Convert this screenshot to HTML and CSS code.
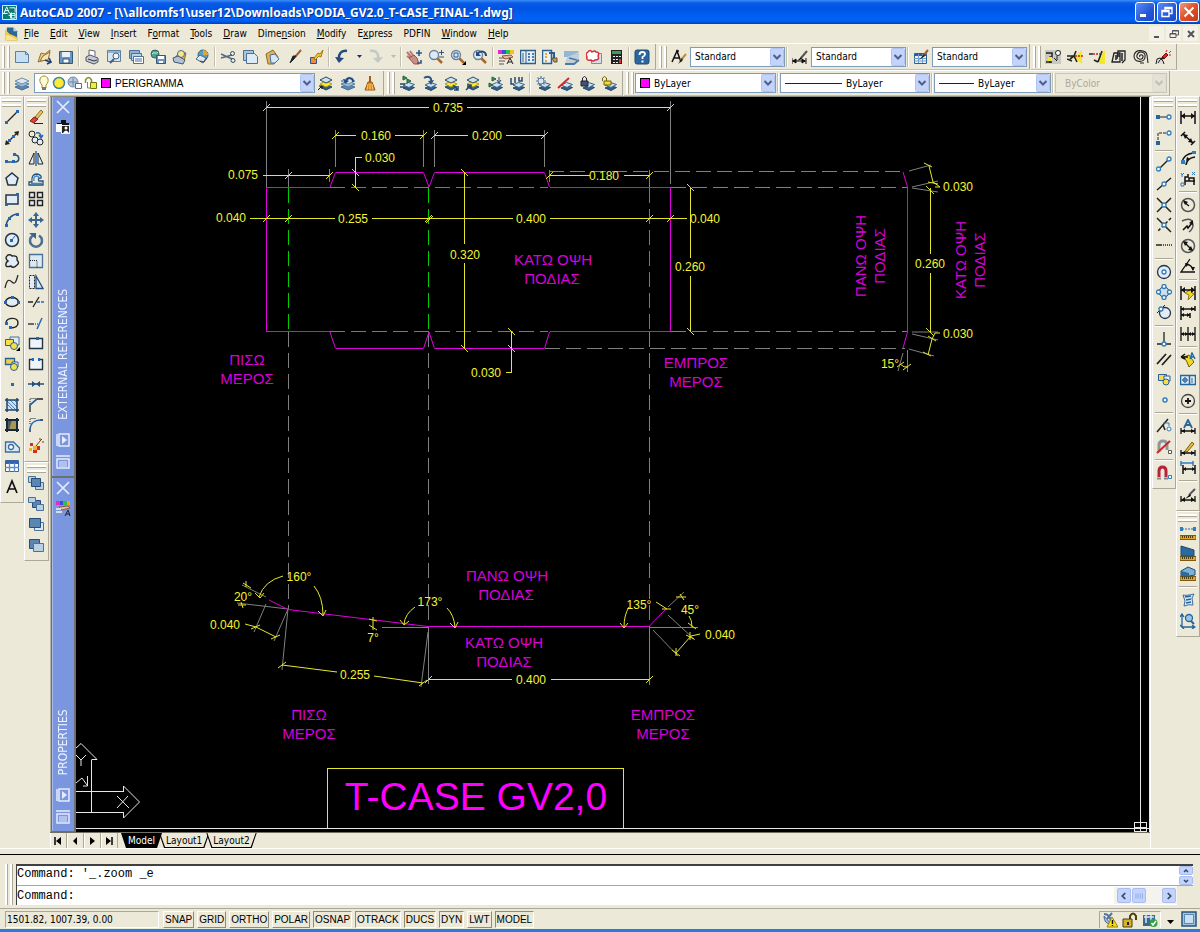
FILE: index.html
```html
<!DOCTYPE html>
<html lang="en">
<head>
<meta charset="utf-8">
<title>AutoCAD 2007</title>
<link rel="stylesheet" href="styles.css">
</head>
<body>
<svg class="defs" aria-hidden="true">
  <symbol id="layers" viewBox="0 0 16 16"><path d="M1 12l7 3 7-3-7-3z" fill="#5d86ad" stroke="#456f98"/><path d="M1 9l7 3 7-3-7-3z" fill="#9dbad4" stroke="#567fa6"/><path d="M1 6l7 3 7-3-7-3z" fill="#dbe8f3" stroke="#6b8fb0"/></symbol>
  <symbol id="lay" viewBox="0 0 16 16"><path d="M4 13l6 2.500 5.500-3-6-2z" fill="#2f5f8f" stroke="#24486d"/><path d="M4 10l6 2.500 5.500-3-6-2z" fill="#cfe0ef" stroke="#3a658f"/></symbol>
  <symbol id="layy" viewBox="0 0 16 16"><path d="M2 12l6 3 6-3-6-3z" fill="#2f5f8f" stroke="#24486d"/><path d="M2 9l6 3 6-3-6-3z" fill="#ffe92e" stroke="#b59c10"/><path d="M2 5l6 3 6-3-6-3z" fill="#cfe0ef" stroke="#24486d"/></symbol>
  <symbol id="mag" viewBox="0 0 16 16"><path d="M9 9l5 5" stroke="#a8682c" stroke-width="2.500"/><circle cx="6" cy="6" r="4.500" fill="#dcebf7" stroke="#6c8299" stroke-width="1.300"/></symbol>
  <symbol id="chev" viewBox="0 0 14 18"><rect x=".5" y=".5" width="13" height="17" rx="1" fill="#c3d3fb" stroke="#b0c4f4"/><path d="M3.500 7l3.500 3.500L10.500 7" stroke="#4d6185" stroke-width="2" fill="none"/></symbol>
  <symbol id="ruler" viewBox="0 0 16 16"><path d="M0 11.500h16v4H0z" fill="#e0a52b" stroke="#80590c"/><path d="M2.500 12v2m2-2v2m2-2v2m2-2v2m2-2v2m2-2v2" stroke="#543a05"/></symbol>
  <symbol id="brush" viewBox="0 0 16 16"><path d="M15 1L9 8" stroke="#9b642f" stroke-width="2"/><path d="M10 7L8 10l-4 4 3-7z" fill="#222" stroke="#222"/></symbol>
</svg>

<header class="titlebar">
  <svg class="app-icon" viewBox="0 0 16 16"><path d="M.5.5h15v15H.5z" fill="#0b7a73" stroke="#dff"/><path d="M2 9l3-7 3 7M3 6h4M1 9h5M8 3h6M7 11h7M10 8v6M14 3v5" stroke="#fff"/><path d="M9 9h5v5H9z" stroke="#fff"/></svg>
  <h1>AutoCAD 2007 - [\\allcomfs1\user12\Downloads\PODIA_GV2.0_T-CASE_FINAL-1.dwg]</h1>
  <div class="win-buttons">
    <button aria-label="Minimize"><svg viewBox="0 0 16 16"><path d="M3 11.500h6" stroke="#fff" stroke-width="3"/></svg></button>
    <button aria-label="Restore"><svg viewBox="0 0 16 16"><path d="M3 6.500h7v6H3zM6 6V3.500h7v6h-3M6 4.500h7M3 7.500h7" stroke="#fff" stroke-width="1.400"/></svg></button>
    <button class="close" aria-label="Close"><svg viewBox="0 0 16 16"><path d="M3.500 3.500l9 9m0-9l-9 9" stroke="#fff" stroke-width="2"/></svg></button>
  </div>
</header>

<nav class="menubar">
  <svg class="doc-icon" viewBox="0 0 16 16"><path d="M3 1h7l4 4v10H3z" fill="#2d6797"/><path d="M10 1l4 4h-4z" fill="#bcd6ea"/><path d="M1 3l5 5 3 1 6 3v3H1z" fill="#f6c843"/><path d="M2 9l5 1 7 4v1H2z" fill="#fbe394"/></svg>
  <a href="#"><u>F</u>ile</a><a href="#"><u>E</u>dit</a><a href="#"><u>V</u>iew</a><a href="#"><u>I</u>nsert</a><a href="#">F<u>o</u>rmat</a><a href="#"><u>T</u>ools</a><a href="#"><u>D</u>raw</a><a href="#">Dime<u>n</u>sion</a><a href="#"><u>M</u>odify</a><a href="#">E<u>x</u>press</a><a href="#">PDFIN</a><a href="#"><u>W</u>indow</a><a href="#"><u>H</u>elp</a>
  <div class="mdi">
    <button aria-label="Minimize drawing"><svg viewBox="0 0 12 12"><path d="M3 9h5" stroke="#555" stroke-width="2"/></svg></button>
    <button aria-label="Restore drawing"><svg viewBox="0 0 12 12"><path d="M2 5.500h6v4H2zM4.500 5V2.500h6V7H8M4.500 3h6M2 6h6" stroke="#555"/></svg></button>
    <button aria-label="Close drawing"><svg viewBox="0 0 12 12"><path d="M3 3l6 6m0-6L3 9" stroke="#555" stroke-width="2"/></svg></button>
  </div>
</nav>

<div class="toolrow">
  <div class="bar">
    <span class="grip"></span>
    <button aria-label="New"><svg viewBox="0 0 16 16"><path d="M1.500 2.500h10l3 3v8h-13z" fill="#c9def0" stroke="#5b80a3"/><path d="M11.500 2.500v3h3" stroke="#5b80a3"/></svg></button>
    <button aria-label="Open"><svg viewBox="0 0 16 16"><path d="M2 13L5 4l4 1 5-4-2 9z" fill="#e9c878" stroke="#93733a"/><path d="M4 12l3-5 7-4-2 8z" fill="#f7e5b4" stroke="#93733a"/><path d="M9 11l5 2M13 9l2 4-4 2" stroke="#1e3f70" stroke-width="1.600"/></svg></button>
    <button aria-label="Save"><svg viewBox="0 0 16 16"><path d="M1.500 2.500h13v12h-13z" fill="#6d95bd" stroke="#35597e"/><path d="M4 3h8v5H4z" fill="#e8f0f8"/><path d="M5 10h6v4H5z" fill="#fff" stroke="#35597e"/></svg></button>
    <span class="sep"></span>
    <button aria-label="Plot"><svg viewBox="0 0 16 16"><path d="M5 7V1l6 1v5" fill="#fff" stroke="#667"/><path d="M2 8l4-2 8 3v4l-4 2-8-3z" fill="#c5c9d4" stroke="#556"/><path d="M4 10l6 2 3-1" stroke="#334"/></svg></button>
    <button aria-label="Plot preview"><svg viewBox="0 0 16 16"><path d="M1.500 1.500h13v11h-13z" fill="#d3e4f3" stroke="#5b80a3"/><path d="M1 3h14" stroke="#5b80a3"/><circle cx="10" cy="7" r="3" fill="#eef6fc" stroke="#445e7c"/><path d="M8 10l-4 4" stroke="#445e7c" stroke-width="2"/></svg></button>
    <button aria-label="Publish"><svg viewBox="0 0 16 16"><path d="M1.500 1.500h10v8h-10z" fill="#8fb2d3" stroke="#4b7197"/><path d="M3.500 4.500h10v7h-10z" fill="#b9d1e7" stroke="#4b7197"/><path d="M5.500 7.500h10v7h-10z" fill="#fff" stroke="#4b7197"/><path d="M7 10h7M7 12h7" stroke="#4b7197"/></svg></button>
    <button aria-label="eTransmit"><svg viewBox="0 0 16 16"><circle cx="5" cy="5" r="4" fill="#4fa08e" stroke="#2c6458"/><path d="M2 5c3-3 4 1 6-2" stroke="#bfe"/><path d="M6.500 6.500h9v8h-9z" fill="#6d95bd" stroke="#35597e"/><path d="M8 7h6v3H8zM9 12h4v2H9z" fill="#fff"/></svg></button>
    <button aria-label="Publish to Web"><svg viewBox="0 0 16 16"><path d="M3 9l5-7 6 2-2 8z" fill="#f3c533" stroke="#8c6c14"/><circle cx="9" cy="5" r="3.500" fill="#f9e593" stroke="#4d6c8a"/><path d="M1 9l5-2 7 4-2 4-9-2z" fill="#b3c3d6" stroke="#44566f"/></svg></button>
    <button aria-label="3D DWF"><svg viewBox="0 0 16 16"><circle cx="9" cy="6" r="5" fill="#4fa3c8" stroke="#33687f"/><path d="M9 1a5 5 0 0 1 5 5H9z" fill="#e9a33b"/><path d="M2 10l4-4 6 3-3 5z" fill="#dce8f2" stroke="#567"/><path d="M6 12l4 1 3-4" stroke="#345"/></svg></button>
    <span class="sep"></span>
    <button aria-label="Cut"><svg viewBox="0 0 16 16"><path d="M1 5l11 5M1 9l11-3" stroke="#556b85" stroke-width="1.400"/><circle cx="12.500" cy="4.500" r="2" stroke="#2f4c70"/><circle cx="13" cy="11.500" r="2" stroke="#2f4c70"/></svg></button>
    <button aria-label="Copy"><svg viewBox="0 0 16 16"><path d="M1.500 1.500h10v10h-10z" fill="#a8c5df" stroke="#4b7197"/><path d="M4.500 4.500h8l3 3v7h-11z" fill="#dceaf6" stroke="#4b7197"/></svg></button>
    <button aria-label="Paste"><svg viewBox="0 0 16 16"><path d="M2 5l7-4 5 7-4 7H4z" fill="#e0b35a" stroke="#8f6a26"/><path d="M6 6l5-1 4 5-4 4H7z" fill="#d7e7f5" stroke="#4b7197"/></svg></button>
    <button aria-label="Match properties"><svg viewBox="0 0 16 16"><use href="#brush"/></svg></button>
    <button aria-label="Block editor"><svg viewBox="0 0 16 16"><path d="M2.500 8.500h6v6h-6z" fill="#f08a3c" stroke="#2c5788"/><path d="M6 9l4-5 2 1 3-4-2 7-2-1-4 4z" fill="#f5c62c" stroke="#a3791a"/></svg></button>
    <span class="sep"></span>
    <button aria-label="Undo"><svg viewBox="0 0 16 16"><path d="M13 2C7 1 4 5 5 12" stroke="#23497e" stroke-width="2.500"/><path d="M1 8l4 6 5-5z" fill="#23497e"/></svg></button>
    <button class="caret" aria-label="Undo list"><svg viewBox="0 0 6 16"><path d="M1 6h5L3.500 9z" fill="#15306a"/></svg></button>
    <button aria-label="Redo"><svg viewBox="0 0 16 16"><path d="M2 2c7-1 9 3 8 10" stroke="#c4c7c8" stroke-width="2.500"/><path d="M5 9l5 5 5-6z" fill="#c4c7c8"/></svg></button>
    <button class="caret" aria-label="Redo list"><svg viewBox="0 0 6 16"><path d="M1 6h5L3.500 9z" fill="#b9bbb8"/></svg></button>
    <span class="sep"></span>
    <button aria-label="Pan"><svg viewBox="0 0 16 16"><path d="M1 3l5 6M4 2l4 6M1 7l4 3" stroke="#b77a70" stroke-width="2"/><path d="M3 9l5-3 3 3 2 6H8z" fill="#c98e86" stroke="#95584f"/><path d="M13 1v6m-3-3h6M11 14h4v-3" stroke="#2c5788" stroke-width="1.600"/></svg></button>
    <button aria-label="Zoom realtime"><svg viewBox="0 0 16 16"><use href="#mag"/><path d="M13.500 1v5M11 3.500h5M11 8h5" stroke="#2c5788"/></svg></button>
    <button aria-label="Zoom window"><svg viewBox="0 0 16 16"><use href="#mag"/><path d="M4 4h4v4H4z" stroke="#2c5788"/><path d="M16 12v4h-4z" fill="#000"/></svg></button>
    <button aria-label="Zoom previous"><svg viewBox="0 0 16 16"><use href="#mag"/><path d="M14 7c0-5-5-6-9-2" stroke="#23497e" stroke-width="2"/><path d="M4 2v5h5z" fill="#23497e"/></svg></button>
    <span class="sep"></span>
    <button aria-label="Properties"><svg viewBox="0 0 16 16"><path d="M0 1h4v4H0z" fill="#e22bd0"/><path d="M4 1h4v4H4z" fill="#3650e0"/><path d="M8 1h4v4H8z" fill="#27c44b"/><path d="M12 1h4v4h-4z" fill="#f2c21c"/><path d="M4 7l9-1 2 2-8 2z" fill="#eab8a0" stroke="#94553d"/><path d="M1 9h5M1 12h6M1 15h5" stroke="#555"/><path d="M9 15l3-6 3 6m-5-2h4" stroke="#222"/></svg></button>
    <button aria-label="DesignCenter"><svg viewBox="0 0 16 16"><path d="M.5 1.500h15v13H.5z" fill="#e6f0f9" stroke="#2f5d8c" stroke-width="1.500"/><path d="M6 2v12M3 4v9" stroke="#2f5d8c"/><path d="M8 4h2v2H8zm4 0h2v2h-2zM8 7h2v2H8zm4 0h2v2h-2zm-4 3h2v2H8zm4 0h2v2h-2z" fill="#4a7dae"/></svg></button>
    <button aria-label="Tool palettes"><svg viewBox="0 0 16 16"><path d="M.5 1.500h9v13h-9z" fill="#e6f0f9" stroke="#2f5d8c" stroke-width="1.500"/><path d="M3 4h2v2H3zm0 3h2v2H3zm0 4h2v2H3z" fill="#e5a92b"/><path d="M7 4h5v7" stroke="#2f5d8c" stroke-width="2"/><path d="M10 9h5v4h-3z" fill="#b8a06c" stroke="#5d5235"/></svg></button>
    <button aria-label="Sheet set manager"><svg viewBox="0 0 16 16"><path d="M0 2h15l-4 6H0z" fill="#8fb7d8"/><path d="M3 8l12-5v9l-6 3H1z" fill="#c3cfd8"/><path d="M1 15h9l5-4M5 9l8 2" stroke="#4b7ba5" stroke-width="1.800"/></svg></button>
    <button aria-label="Markup set manager"><svg viewBox="0 0 16 16"><path d="M5.500 4.500h10v10h-10z" fill="#d3dde9" stroke="#7a8fa8"/><path d="M2 3q2-3 4 0 3-2 4 0 4 0 2 4 2 4-3 4-2 2-4 0-5 1-4-3-2-3 1-5z" fill="#fff" stroke="#db2b35" stroke-width="1.500"/></svg></button>
    <button aria-label="Quick calculator"><svg viewBox="0 0 16 16"><path d="M3 1h11v14H3z" fill="#222"/><path d="M4 2h9v3H4z" fill="#3f9c57"/><path d="M5 7h2v1H5zm3 0h2v1H8zm3 0h2v1h-2zM5 10h2v1H5zm3 0h2v1H8zM5 13h2v1H5zm3 0h2v1H8z" fill="#eee"/><path d="M11 10h2v4h-2z" fill="#d33"/></svg></button>
    <span class="sep"></span>
    <button aria-label="Help"><svg viewBox="0 0 16 16"><rect x="1" y="1" width="14" height="14" rx="2" fill="#2a67a0" stroke="#1f4a77"/><path d="M5.500 6q0-3 2.800-3 2.700 0 2.700 2.300Q11 7 8.500 8v2" stroke="#fff" stroke-width="1.800"/><path d="M7.500 11.500h2v2h-2z" fill="#fff"/></svg></button>
  </div>
  <div class="bar">
    <span class="grip"></span>
    <button aria-label="Text style"><svg viewBox="0 0 16 16"><path d="M1 13L6 2l4 11M3 9h5M5 2h3" stroke="#111" stroke-width="1.500"/><path d="M15 5l-5 6" stroke="#c08a3c" stroke-width="2"/><path d="M11 9l-4 6 5-4z" fill="#222"/></svg></button>
    <label class="combo w-std"><select aria-label="Text style"><option>Standard</option></select><svg class="chev"><use href="#chev"/></svg></label>
    <span class="sep"></span>
    <button aria-label="Dimension style"><svg viewBox="0 0 16 16"><path d="M0 12h14M0 9v6M14 9v6M1 12l3-2v4zM13 12l-3-2v4z" fill="#111" stroke="#111"/><path d="M15 2L9 9" stroke="#555" stroke-width="2"/><path d="M9 8l-4 4 5-2z" fill="#111"/></svg></button>
    <label class="combo w-std"><select aria-label="Dimension style"><option>Standard</option></select><svg class="chev"><use href="#chev"/></svg></label>
    <span class="sep"></span>
    <button aria-label="Table style"><svg viewBox="0 0 16 16"><path d="M1.500 4.500h12v10h-12z" fill="#e9f2fa" stroke="#2c5f95"/><path d="M1 5h13v2H1z" fill="#2c5f95"/><path d="M1 9.500h12M1 12h12M5.500 5v9M9.500 5v9" stroke="#6f9fcc"/><path d="M15 1L10 7" stroke="#a65f28" stroke-width="2"/><path d="M11 5l-5 6 6-4z" fill="#222"/></svg></button>
    <label class="combo w-std"><select aria-label="Table style"><option>Standard</option></select><svg class="chev"><use href="#chev"/></svg></label>
  </div>
  <div class="bar">
    <span class="grip"></span>
    <button aria-label="Layer merge"><svg viewBox="0 0 16 16"><path d="M0 1h16v14H0z" fill="#c9c9c4"/><path d="M1 4h6v4H5v6M1 13h6" stroke="#222" stroke-width="1.500"/><path d="M3 8h4v4H3z" fill="#f5e72a"/><circle cx="13" cy="4" r="2.500" fill="#fff" stroke="#222"/><path d="M12 7v4M9 9l3 3" stroke="#222"/></svg></button>
    <button aria-label="Break line"><svg viewBox="0 0 16 16"><path d="M7 8l8-7v14z" fill="#f5e72a"/><path d="M0 7h7M3 10l4-3 2-5M7 7l3 6M0 10l5 2" stroke="#222" stroke-width="1.600"/><path d="M8 7h8" stroke="#c22" stroke-width="1.500" stroke-dasharray="2 1"/></svg></button>
    <button aria-label="Extend line"><svg viewBox="0 0 16 16"><path d="M10 8l6-7v14h-6z" fill="#f5e72a"/><path d="M0 5h4M13 2L9 13M5 11l4 2" stroke="#222" stroke-width="1.600"/><path d="M4 5h7" stroke="#c22" stroke-width="1.500" stroke-dasharray="2 1"/></svg></button>
    <button aria-label="Copy nested"><svg viewBox="0 0 16 16"><path d="M1 13l2-9h6v9zM6 10l1-8h7v9l-3 3" fill="#e6e6e0" stroke="#222" stroke-width="1.300"/><path d="M5 6v5M11 4v8M8 5v3" stroke="#222" stroke-width="1.500"/></svg></button>
    <button aria-label="Spiral"><svg viewBox="0 0 16 16"><path d="M7 8c-2-3 4-3 3 0-1 4-7 2-6-2C6 1 13 3 12 8c0 6-11 6-11-1 1-8 12-6 13-1l1 8M7 14h4" stroke="#222" stroke-width="1.100"/></svg></button>
    <button aria-label="Explode text"><svg viewBox="0 0 16 16"><path d="M7 8l4-4 2 2-4 4z" fill="#d22" stroke="#7a1010"/><path d="M11 3l1-2m2 3l2-2m-2 4h2" stroke="#c22"/><path d="M1 15l1-5 3-1 3 3 1 3M3 14l2-3" stroke="#222" fill="#ddd"/><path d="M9 9l-4 1" stroke="#222" stroke-width="2"/></svg></button>
  </div>
</div>

<div class="toolrow">
  <div class="bar">
    <span class="grip"></span>
    <button aria-label="Layer properties"><svg viewBox="0 0 16 16"><use href="#layers"/></svg></button>
    <label class="combo w-layer">
      <svg class="layer-state" viewBox="2 0 62 16"><path d="M5 10C1 6 3 1 7 1s6 5 2 9v3H5z" fill="#fffbd0" stroke="#9a8c3c"/><path d="M5 12h4v3H5z" fill="#777"/><circle cx="22" cy="8" r="5.500" fill="#ffe936" stroke="#3987a5" stroke-width="1.500"/><circle cx="36" cy="7" r="5" fill="#b9c9da" stroke="#6988a7"/><path d="M32 7h8M36 3v8" stroke="#6988a7"/><path d="M38.500 8.500h6v5h-6z" fill="#fff" stroke="#668"/><path d="M48.500 8V5q3-5 6 0v4" stroke="#83912a" stroke-width="1.500"/><path d="M53.500 7.500h6v6h-6z" fill="#f2ec3a" stroke="#71761a"/><path d="M50.500 7v6h3" stroke="#83912a"/></svg>
      <span class="swatch"></span>
      <select aria-label="Layer"><option>PERIGRAMMA</option></select><svg class="chev"><use href="#chev"/></svg></label>
    <button aria-label="Make object's layer current"><svg viewBox="0 0 16 16"><use href="#layy"/><path d="M0 15l4-4m-3 0h3v3" stroke="#111"/></svg></button>
    <button aria-label="Layer previous"><svg viewBox="0 0 16 16"><use href="#layers"/><path d="M13 7C13 2 8 2 6 6" stroke="#23497e" stroke-width="2"/><path d="M3 4l2 5 4-3z" fill="#23497e"/></svg></button>
    <button aria-label="Layer states"><svg viewBox="0 0 16 16"><path d="M8 1v6" stroke="#9c5f1d" stroke-width="2"/><path d="M6 7h4l3 8H3z" fill="#e08b26" stroke="#96540f"/><path d="M6 9l-1 6M8 9v6M10 9l1 6" stroke="#f6c36b"/></svg></button>
  </div>
  <div class="bar">
    <span class="grip"></span>
    <button aria-label="Layer match"><svg viewBox="0 0 16 16"><use href="#lay"/><path d="M4 1l4 2-4 2zM8 4l4 2-4 2z" fill="#3b9466" stroke="#235d3e"/><path d="M1 9h5M1 12h5" stroke="#24486d" stroke-width="1.500"/></svg></button>
    <button aria-label="Change to current layer"><svg viewBox="0 0 16 16"><use href="#lay"/><path d="M3 3c5-3 8 0 7 4" stroke="#2c5788" stroke-width="2"/><path d="M7 6l3 4 3-5z" fill="#2c5788"/></svg></button>
    <button aria-label="Layer isolate"><svg viewBox="0 0 16 16"><use href="#layy"/><path d="M10 10l5 5m-4 0h4v-4" stroke="#24486d" stroke-width="1.500"/></svg></button>
    <button aria-label="Layer unisolate"><svg viewBox="0 0 16 16"><use href="#layy"/><path d="M1 15l5-5m-4 0h4v4" stroke="#24486d" stroke-width="1.500"/></svg></button>
    <button aria-label="Copy objects to layer"><svg viewBox="0 0 16 16"><use href="#lay"/><path d="M5 2l4 2-4 2zM2 8l4 2-4 2z" fill="#3b9466" stroke="#235d3e"/><path d="M12 2v5m-2-2l2 3 2-3" stroke="#24486d"/></svg></button>
    <button aria-label="Layer walk"><svg viewBox="0 0 16 16"><use href="#lay"/><path d="M2 3v6h3M6 2v6M10 2v4h3V2" stroke="#24486d" stroke-width="1.500"/></svg></button>
    <span class="sep"></span>
    <button aria-label="Layer freeze"><svg viewBox="0 0 16 16"><use href="#lay"/><path d="M6 1v10M1 6h10M2.500 2.500l7 7m0-7l-7 7" stroke="#5d7fa2" stroke-width="1.200"/><circle cx="6" cy="6" r="3" fill="#dbe7f1" stroke="#5d7fa2"/></svg></button>
    <button aria-label="Layer off"><svg viewBox="0 0 16 16"><use href="#lay"/><path d="M1 13L12 3" stroke="#d0242b" stroke-width="1.800"/></svg></button>
    <button aria-label="Layer lock"><svg viewBox="0 0 16 16"><use href="#lay"/><path d="M2 6h7v5H2z" fill="#3d5575" stroke="#223"/><path d="M3.500 6V3q2-3 4 0v3" stroke="#223"/></svg></button>
    <button aria-label="Layer unlock"><svg viewBox="0 0 16 16"><use href="#lay"/><path d="M3 6h7v4H3z" fill="#f2dc2b" stroke="#6e620e"/><path d="M1.500 6V3q2-3 4 0v3" stroke="#6e620e"/></svg></button>
  </div>
  <div class="bar">
    <span class="grip"></span>
    <label class="combo w-color"><span class="swatch"></span><select aria-label="Color"><option>ByLayer</option></select><svg class="chev"><use href="#chev"/></svg></label>
    <span class="sep"></span>
    <label class="combo w-type"><span class="rule"></span><select aria-label="Linetype"><option>ByLayer</option></select><svg class="chev"><use href="#chev"/></svg></label>
    <span class="sep"></span>
    <label class="combo w-weight"><span class="rule"></span><select aria-label="Lineweight"><option>ByLayer</option></select><svg class="chev"><use href="#chev"/></svg></label>
    <span class="sep"></span>
    <label class="combo w-plot off"><select aria-label="Plot style" disabled><option>ByColor</option></select><svg class="chev"><use href="#chev"/></svg></label>
  </div>
</div>

<main class="workspace">
  <div class="dock">
    <div class="vbar h-draw">
      <span class="vgrip"></span>
      <button aria-label="Line"><svg viewBox="0 0 16 16"><path d="M2 14L14 2" stroke="#222" stroke-width="1.300"/><path d="M1 12h3v3H1zM12 1h3v3h-3z" fill="#2469b5"/></svg></button>
      <button aria-label="Construction line"><svg viewBox="0 0 16 16"><path d="M2 14L14 2" stroke="#222" stroke-width="1.500"/><path d="M1 15l1-5 4 4zM15 1l-1 5-4-4z" fill="#222"/><path d="M4 9h3v3H4zM8 5h3v3H8z" fill="#2469b5"/></svg></button>
      <button aria-label="Polyline"><svg viewBox="0 0 16 16"><path d="M2 12h9c5 0 5-7 0-7" stroke="#234f7e" stroke-width="1.600"/><path d="M1 10h3v3H1zM8 10h3v3H8zM9 3h3v3H9z" fill="#2469b5"/></svg></button>
      <button aria-label="Polygon"><svg viewBox="0 0 16 16"><path d="M8 2l6 5-2 7H4L2 7z" fill="#e1ecf6" stroke="#223548" stroke-width="1.500"/></svg></button>
      <button aria-label="Rectangle"><svg viewBox="0 0 16 16"><path d="M2 4h12v9H2z" fill="#e1ecf6" stroke="#223548" stroke-width="1.500"/><path d="M1 12h3v3H1zM12 2h3v3h-3z" fill="#2469b5"/></svg></button>
      <button aria-label="Arc"><svg viewBox="0 0 16 16"><path d="M2 14C3 7 8 2 14 2" stroke="#234f7e" stroke-width="1.500"/><path d="M1 12h3v3H1zM4 5h3v3H4zM12 1h3v3h-3z" fill="#2469b5"/></svg></button>
      <button aria-label="Circle"><svg viewBox="0 0 16 16"><circle cx="8" cy="8" r="6.500" fill="#e1ecf6" stroke="#223548" stroke-width="1.500"/><path d="M7 9l4-5" stroke="#2469b5"/><path d="M6 7h3v3H6z" fill="#2469b5"/></svg></button>
      <button aria-label="Revision cloud"><svg viewBox="0 0 16 16"><path d="M4 8q-4-3 0-6 3-1 4 1 6-1 5 4 3 3 0 5-4 4-6 1-6 2-5-2 0-2 2-3z" fill="#e1ecf6" stroke="#222" stroke-width="1.400"/></svg></button>
      <button aria-label="Spline"><svg viewBox="0 0 16 16"><path d="M1 14c2-9 4-9 7-6s4 0 6-7" stroke="#222" stroke-width="1.200"/></svg></button>
      <button aria-label="Ellipse"><svg viewBox="0 0 16 16"><ellipse cx="8" cy="8" rx="6.500" ry="4.500" fill="#e1ecf6" stroke="#222" stroke-width="1.400"/><path d="M0 7h3v3H0zM13 7h3v3h-3zM7 2h3v3H7z" fill="#2469b5"/></svg></button>
      <button aria-label="Ellipse arc"><svg viewBox="0 0 16 16"><path d="M2 7c2-5 12-5 12 1 0 5-6 5-8 5" stroke="#222" stroke-width="1.400"/><path d="M1 7h3v3H1zM5 11h3v3H5z" fill="#2469b5"/></svg></button>
      <button aria-label="Insert block"><svg viewBox="0 0 16 16"><path d="M6 2h9v8H6z" fill="#dceaf6" stroke="#4b7197"/><path d="M1.500 4.500h8v6h-8z" fill="#f4e04a" stroke="#2c5f95"/><circle cx="10" cy="11" r="3.500" fill="#f4e04a" stroke="#2c5f95"/><path d="M16 12v4h-4z" fill="#000"/></svg></button>
      <button aria-label="Make block"><svg viewBox="0 0 16 16"><path d="M1.500 2.500h9v6h-9z" fill="#e8d24a" stroke="#2c5f95" stroke-width="1.300"/><path d="M8 6h6v5H8z" fill="#e6f0f9" stroke="#2c5f95"/><circle cx="10" cy="11" r="3.500" fill="#f4e04a" stroke="#2c5f95"/></svg></button>
      <button aria-label="Point"><svg viewBox="0 0 16 16"><path d="M7 7h3v3H7z" fill="#2469b5"/></svg></button>
      <button aria-label="Hatch"><svg viewBox="0 0 16 16"><path d="M3 3h10v10H3z" fill="#cfe0f0"/><path d="M3 7l6 6M3 4l9 9M6 3l7 7M10 3l3 3" stroke="#4a84bb"/><path d="M3 1v14M13 1v14M1 3h14M1 13h14" stroke="#204468" stroke-width="1.500"/></svg></button>
      <button aria-label="Gradient"><svg viewBox="0 0 16 16"><path d="M3 3h10v10H3z" fill="#4e5b66"/><path d="M8 3h5v10H5z" fill="#a49a55"/><path d="M3 1v14M13 1v14M1 3h14M1 13h14" stroke="#1b2836" stroke-width="2"/></svg></button>
      <button aria-label="Region"><svg viewBox="0 0 16 16"><path d="M1.500 14V4h8l6 6v4z" fill="#d5e6f4" stroke="#3c6f9f" stroke-width="1.300"/><circle cx="7" cy="9" r="2.500" fill="#fff" stroke="#3c6f9f" stroke-width="1.300"/></svg></button>
      <button aria-label="Table"><svg viewBox="0 0 16 16"><path d="M1.500 2.500h13v11h-13z" fill="#fff" stroke="#3565a8"/><path d="M1 3h14v3H1z" fill="#3565a8"/><path d="M1 9.500h14M5.500 5v9M10.500 5v9" stroke="#5e8bc7" stroke-width="1.300"/></svg></button>
      <button aria-label="Multiline text"><svg viewBox="0 0 16 16"><path d="M3 14L8 2l5 12M4.500 10h7" stroke="#111" stroke-width="1.700"/></svg></button>
    </div>
  </div>
  <div class="dock wide">
    <div class="vbar h-modify">
      <span class="vgrip"></span>
      <button aria-label="Erase"><svg viewBox="0 0 16 16"><path d="M7 8l6-7 2 2-6 7z" fill="#e8c45c" stroke="#8e6e1e"/><path d="M2 12l4-4 4 2-4 4z" fill="#d8443b" stroke="#8b2119"/><path d="M6 14.500h9" stroke="#222"/></svg></button>
      <button aria-label="Copy"><svg viewBox="0 0 16 16"><circle cx="4" cy="4" r="3" stroke="#222"/><circle cx="7" cy="10" r="3" fill="#e1ecf6" stroke="#222"/><circle cx="12" cy="12" r="3" fill="#e1ecf6" stroke="#222"/><path d="M8 3q5-1 5 4m-2-2l2 3 2-3" stroke="#2469b5" stroke-width="1.500"/></svg></button>
      <button aria-label="Mirror"><svg viewBox="0 0 16 16"><path d="M6 3v11H1zM10 3v11h5z" fill="#e1ecf6" stroke="#222"/><path d="M8 1v15" stroke="#2469b5" stroke-width="1.500"/></svg></button>
      <button aria-label="Offset"><svg viewBox="0 0 16 16"><path d="M1 14v-3h3q-1-8 5-8 5 1 4 4-4 0-2 3h4v4z" stroke="#234f7e" stroke-width="1.300"/><path d="M3 12.500h11M6 10q-1-5 3-5 3 1 1 2" stroke="#3a86cf" stroke-width="1.300"/></svg></button>
      <button aria-label="Array"><svg viewBox="0 0 16 16"><path d="M1.500 1.500h5v5h-5zM9.500 1.500h5v5h-5zM1.500 9.500h5v5h-5zM9.500 9.500h5v5h-5z" fill="#e1ecf6" stroke="#222" stroke-width="1.400"/></svg></button>
      <button aria-label="Move"><svg viewBox="0 0 16 16"><path d="M8 2v12M2 8h12" stroke="#3a6591" stroke-width="2"/><path d="M8 0l3 4H5zM8 16l3-4H5zM0 8l4-3v6zM16 8l-4-3v6z" fill="#3a6591"/></svg></button>
      <button aria-label="Rotate"><svg viewBox="0 0 16 16"><path d="M5 3.500a6 6 0 1 0 6 0" stroke="#4a6f94" stroke-width="2.500"/><path d="M1 1h7v6z" fill="#3a6591"/></svg></button>
      <button aria-label="Scale"><svg viewBox="0 0 16 16"><path d="M1.500 1.500h13v13h-13z" fill="#dbe9f5" stroke="#4b7197" stroke-width="1.300"/><path d="M2 7.500h7V15" stroke="#222" stroke-dasharray="1 1"/></svg></button>
      <button aria-label="Stretch"><svg viewBox="0 0 16 16"><path d="M1.500 1.500h5v13h-5z" fill="#e1ecf6" stroke="#222" stroke-dasharray="2 1"/><path d="M8 2v12.500h7z" fill="#dbe9f5" stroke="#234f7e" stroke-width="1.300"/></svg></button>
      <button aria-label="Trim"><svg viewBox="0 0 16 16"><path d="M0 8h5M5 13L11 3" stroke="#222" stroke-width="1.300"/><path d="M9 8h7" stroke="#2469b5" stroke-width="1.500" stroke-dasharray="3 1"/></svg></button>
      <button aria-label="Extend"><svg viewBox="0 0 16 16"><path d="M0 9h6" stroke="#222" stroke-width="1.300"/><path d="M7 9h3" stroke="#222" stroke-dasharray="1 1"/><path d="M9 14l5-11" stroke="#2469b5" stroke-width="1.500"/></svg></button>
      <button aria-label="Break at point"><svg viewBox="0 0 16 16"><path d="M1.500 3.500h13v10h-13z" fill="#eef4fa" stroke="#223548" stroke-width="1.400"/><path d="M8 2h3v3H8z" fill="#2469b5"/></svg></button>
      <button aria-label="Break"><svg viewBox="0 0 16 16"><path d="M5 3.500H1.500v10h13v-10H11" fill="#eef4fa" stroke="#223548" stroke-width="1.400"/><path d="M4 2h2v3H4zM10 2h2v3h-2z" fill="#2469b5"/></svg></button>
      <button aria-label="Join"><svg viewBox="0 0 16 16"><path d="M0 8h16" stroke="#234f7e" stroke-width="1.500"/><path d="M4 5l4 3-4 3zM12 5L8 8l4 3z" fill="#234f7e"/></svg></button>
      <button aria-label="Chamfer"><svg viewBox="0 0 16 16"><path d="M2 15V8l7-6h6" stroke="#222" stroke-width="1.300"/><path d="M2 8l7-6" stroke="#2469b5" stroke-width="1.600"/><path d="M2 7V1.500h6" stroke="#222" stroke-dasharray="1 1"/></svg></button>
      <button aria-label="Fillet"><svg viewBox="0 0 16 16"><path d="M2 15v-3M12 3h3" stroke="#222" stroke-width="1.300"/><path d="M2 13C2 7 6 3 13 3" stroke="#2469b5" stroke-width="1.600"/><path d="M2 7V1.500h6" stroke="#222" stroke-dasharray="1 1"/></svg></button>
      <button aria-label="Explode"><svg viewBox="0 0 16 16"><path d="M2 5h3v3H2zM5 12h4v3H5zM9 8h3v4H9z" fill="#cf2f24"/><path d="M5 8h4v4H5zM1 10h3v3H1z" fill="#f0b32a"/><path d="M8 8l4-5M12 3l2-2m0 3h2m-4-2V0" stroke="#6d3a1d"/></svg></button>
    </div>
    <div class="vbar h-order">
      <span class="vgrip"></span>
      <button aria-label="Bring to front"><svg viewBox="0 0 16 16"><path d="M7.500 7.500h8v7h-8z" fill="#b9cfe3" stroke="#4b7197"/><path d="M.5 1.500h7v6h-7z" fill="#b9cfe3" stroke="#4b7197"/><path d="M3.500 3.500h9v8h-9z" fill="#5c86b0" stroke="#234f7e"/></svg></button>
      <button aria-label="Send to back"><svg viewBox="0 0 16 16"><path d="M4.500 4.500h8v7h-8z" fill="#5c86b0" stroke="#234f7e"/><path d="M.5 1.500h7v5h-7zM8.500 8.500h7v6h-7z" fill="#b9cfe3" stroke="#4b7197"/></svg></button>
      <button aria-label="Bring above objects"><svg viewBox="0 0 16 16"><path d="M6.500 6.500h9v8h-9z" fill="#dbe7f1" stroke="#4b7197"/><path d="M1.500 2.500h11v9h-11z" fill="#5c86b0" stroke="#234f7e"/></svg></button>
      <button aria-label="Send under objects"><svg viewBox="0 0 16 16"><path d="M1.500 2.500h10v9h-10z" fill="#5c86b0" stroke="#234f7e"/><path d="M5.500 6.500h10v8h-10z" fill="#b9cfe3" stroke="#4b7197"/></svg></button>
    </div>
  </div>

  <section class="document">
    <div class="view">
      <aside class="palettes">
        <div class="palette xref">
          <button aria-label="Close palette"><svg viewBox="0 0 16 16"><path d="M2 2l12 12M14 2L2 14" stroke="#e6ecfb" stroke-width="1.700"/></svg></button>
          <svg class="pal-icon" viewBox="0 0 16 16"><path d="M2 4h12v5H2z" fill="#111"/><path d="M6 1h5v4H6z" fill="#111"/><path d="M1 5h6v8H1z" fill="#fff"/><path d="M6 6h9v9H6z" fill="#e8eefb"/><path d="M7 7h7v7H7z" fill="#222"/><circle cx="11" cy="9" r="1.500" fill="#fff"/><path d="M8 14q3-5 6 0z" fill="#fff"/></svg>
          <h2>EXTERNAL REFERENCES</h2>
          <button aria-label="Auto-hide"><svg viewBox="0 0 16 16"><path d="M2 2v12M4 2h10v12H4z" stroke="#e6ecfb" stroke-width="1.500"/><path d="M7 4l5 4-5 4z" fill="#e6ecfb"/></svg></button>
          <button aria-label="Palette properties"><svg viewBox="0 0 16 16"><path d="M1 2h14M2 5h12v9H2z" stroke="#e6ecfb" stroke-width="1.500"/><path d="M4 8h8M4 10h8M4 12h8" stroke="#e6ecfb"/></svg></button>
        </div>
        <div class="palette props">
          <button aria-label="Close palette"><svg viewBox="0 0 16 16"><path d="M2 2l12 12M14 2L2 14" stroke="#e6ecfb" stroke-width="1.700"/></svg></button>
          <svg class="pal-icon" viewBox="0 0 16 16"><path d="M1 1h4v4H1z" fill="#e22bd0"/><path d="M5 1h3v4H5z" fill="#3650e0"/><path d="M8 1h4v4H8z" fill="#27c44b"/><path d="M12 1h3v4h-3z" fill="#f2a21c"/><path d="M4 7l9-1 2 2-8 2z" fill="#eab8a0" stroke="#94553d"/><path d="M1 9h5M1 12h6" stroke="#ddd" stroke-width="2"/><path d="M10 16l3-6 2 6m-4-2h4" stroke="#222"/></svg>
          <h2>PROPERTIES</h2>
          <button aria-label="Auto-hide"><svg viewBox="0 0 16 16"><path d="M2 2v12M4 2h10v12H4z" stroke="#e6ecfb" stroke-width="1.500"/><path d="M7 4l5 4-5 4z" fill="#e6ecfb"/></svg></button>
          <button aria-label="Palette properties"><svg viewBox="0 0 16 16"><path d="M1 2h14M2 5h12v9H2z" stroke="#e6ecfb" stroke-width="1.500"/><path d="M4 8h8M4 10h8M4 12h8" stroke="#e6ecfb"/></svg></button>
        </div>
      </aside>
      <div class="canvas">
        <svg class="drawing" viewBox="76 97 1073 735" preserveAspectRatio="xMinYMin meet" role="img" aria-label="T-CASE GV2,0 drawing">
          <g class="ext">
            <path d="M266.500 101V187M670.500 101V184M335.500 130V167M423.500 130V167M434.500 130V167M544.500 130V167M288.500 169V187M329.500 169V182M549.500 170V182M649.500 170V187"/>
            <path d="M382 627.500H428M650 627.500H698M428.500 627V684M649.500 627V685"/>
            <path class="dash" d="M549 171.500H905M671 187.500H907M671 331.500H907M545 348.500H905M288.500 332V609M428.500 332V627M649.500 332V627"/>
            <path class="soft" d="M909 171L931 165M912 187L938 181M912 188L938 192M912 332H938M912 334L938 340M909 349L934 356M907.500 350V372M903 353L898 371M242 585L266 597M237 603L288 609M266 604L254 632M288 609L274 641M288 609L282 670M428 632L421 687M668 607L684 592M668 615L695 640M653 630L678 656"/>
          </g>
          <g class="fold"><path d="M330 187.500H548M330 331.500H548M288.500 188V331M428.500 188V331M649.500 188V331"/></g>
          <g class="cut">
            <path d="M330 187.500H266.500V331.500H330M549.500 187.500H670.500V331.500H549.500M336 172.500H423M435 172.500H544M336 348.500H423M435 348.500H544M907.500 187V332M428 626.500H649"/>
            <path class="soft" d="M330 187L335.500 172.500M423.500 172.500L429 187L434.500 172.500M544.500 172.500L549.500 187M330 332L335.500 348.500M423.500 348.500L429 332L434.500 348.500M544.500 348.500L549.500 332M903 172L907.500 187M907.500 332L903 348M269 600L288 609.500L428 626.500M649 626.500L666 609"/>
          </g>
          <g class="dim">
            <path d="M267 107.500H429M467 107.500H670M335 135.500H356M395 135.500H424M435 135.500H468M506 135.500H544M362 157.500H355.500V188M263 175.500H330M549 175.500H590M624 175.500H650M250 218.500H335M372 218.500H513M550 218.500H687M464.500 172V244M464.500 263V348M690.500 188V258M690.500 276V331M511.500 332V372.500H506M930.500 188V254M930.500 273V332M429 679.500H512M551 679.500H649"/>
            <path class="soft" d="M263 111l7-7M667 111l7-7M332 139l7-7M420 139l7-7M431 139l7-7M541 139l7-7M285 179l7-7M326 179l7-7M546 179l7-7M646 179l7-7M263 222l7-7M285 222l7-7M425 222l7-7M426 223l7-7M646 222l7-7M667 222l7-7M352 169l7 7M352 184l7 7M461 169l7 7M461 345l7 7M687 184l7 7M687 328l7 7M508 328l7 7M508 345l7 7M425 683l7-7M646 683l7-7"/>
            <path class="soft" d="M924 163l8 4M929 166L933 182L940 187H935M928 182l10 2M926 186l8 8M926 328l8 8M940 333H935L932 339L928 355M928 336l8 5M923 352l8 4M900 364Q904 368 908 367M897 367l7-5M903 370l8-6"/>
            <path class="soft" d="M283 576Q264 581 259 597M255 593l5 5 4-5M314 586Q323 597 323 615M318 611l5 5 3-6M243 583l8 5M246 581v6M238 605h8M241 602l2 6M245 624L256 627L276 637M251 629l9-4M271 639l9-4M282 665L337 672M374 676L423 683M278 668l8-6M419 686l8-6M373 617v13M369 619l8 2M369 625l8 5M415 607Q405 614 404 624M400 620l4 5 5-4M447 608Q454 615 455 627M450 623l5 5 3-6M629 607Q624 615 624 627M620 623l4 5 4-5M656 602L667 609M662 609h9M676 597h10M680 594l4 6M689 616Q692 620 692 627M688 623l8 6M676 653L691 636L700 634M672 650l8 6M676 648v8M686 635l8 4M690 632v8"/>
            <path d="M327.500 768.500H623.500V828.500H327.500z"/>
          </g>
          <g class="num">
            <text x="448" y="112">0.735</text><text x="376" y="140">0.160</text><text x="487" y="140">0.200</text><text x="380" y="162">0.030</text><text x="243" y="179">0.075</text><text x="604" y="180">0.180</text><text x="231" y="222">0.040</text><text x="353" y="223">0.255</text><text x="531" y="223">0.400</text><text x="705" y="223">0.040</text><text x="465" y="259">0.320</text><text x="690" y="271">0.260</text><text x="486" y="377">0.030</text><text x="958" y="191">0.030</text><text x="930" y="268">0.260</text><text x="958" y="338">0.030</text><text x="890" y="368">15°</text>
            <text x="299" y="581">160°</text><text x="243" y="601">20°</text><text x="225" y="629">0.040</text><text x="355" y="679">0.255</text><text x="373" y="642">7°</text><text x="430" y="606">173°</text><text x="531" y="684">0.400</text><text x="639" y="609">135°</text><text x="690" y="614">45°</text><text x="720" y="639">0.040</text>
          </g>
          <g class="note">
            <text x="553" y="265">ΚΑΤΩ ΟΨΗ</text><text x="552" y="284">ΠΟΔΙΑΣ</text>
            <text x="247" y="365">ΠΙΣΩ</text><text x="247" y="384">ΜΕΡΟΣ</text>
            <text x="696" y="368">ΕΜΠΡΟΣ</text><text x="696" y="387">ΜΕΡΟΣ</text>
            <text x="507" y="581">ΠΑΝΩ ΟΨΗ</text><text x="506" y="600">ΠΟΔΙΑΣ</text>
            <text x="504" y="648">ΚΑΤΩ ΟΨΗ</text><text x="504" y="667">ΠΟΔΙΑΣ</text>
            <text x="309" y="720">ΠΙΣΩ</text><text x="309" y="739">ΜΕΡΟΣ</text>
            <text x="663" y="720">ΕΜΠΡΟΣ</text><text x="663" y="739">ΜΕΡΟΣ</text>
            <text transform="translate(866 256) rotate(-90)">ΠΑΝΩ ΟΨΗ</text><text transform="translate(885 256) rotate(-90)">ΠΟΔΙΑΣ</text>
            <text transform="translate(966 260) rotate(-90)">ΚΑΤΩ ΟΨΗ</text><text transform="translate(985 260) rotate(-90)">ΠΟΔΙΑΣ</text>
            <text class="big" x="476" y="810">T-CASE GV2,0</text>
          </g>
          <g class="ucs">
            <path d="M76 828.500H1149M1140.500 97V832M1134.500 822.500h12v9h-12zM1134 827.500h12M91.500 760V812M76 791.500H123.500V786M76 812.500H123.500V818"/>
            <path class="soft" d="M76 748L81 743.500L97 759.500H91.500M123.500 786L139.500 802L123.500 818M76 755L81 760L86 755M81 760V766M87.500 776V786H83M76 783L82 778L87 785M117 796L129 808M128 796L117 808"/>
          </g>
        </svg>
      </div>
    </div>
    <div class="tabs">
      <button aria-label="First"><svg viewBox="0 0 12 12"><path d="M3 2v8" stroke="#000" stroke-width="1.500"/><path d="M9 2v8L4 6z" fill="#000"/></svg></button>
      <button aria-label="Previous"><svg viewBox="0 0 12 12"><path d="M8 2v8L4 6z" fill="#000"/></svg></button>
      <button aria-label="Next"><svg viewBox="0 0 12 12"><path d="M4 2v8l5-4z" fill="#000"/></svg></button>
      <button aria-label="Last"><svg viewBox="0 0 12 12"><path d="M9 2v8" stroke="#000" stroke-width="1.500"/><path d="M3 2v8l5-4z" fill="#000"/></svg></button>
      <a class="tab on" href="#">Model</a><a class="tab" href="#">Layout1</a><a class="tab" href="#">Layout2</a>
    </div>
  </section>

  <div class="dock">
    <div class="vbar h-snap">
      <span class="vgrip"></span>
      <button aria-label="Temporary track point"><svg viewBox="0 0 16 16"><path d="M2 8h12" stroke="#222"/><path d="M0 6h4v4H0z" fill="#23659c"/><circle cx="13" cy="8" r="2" fill="#fff" stroke="#2f7dbd" stroke-width="1.300"/></svg></button>
      <button aria-label="Snap from"><svg viewBox="0 0 16 16"><path d="M2 14V3h10" stroke="#222" stroke-dasharray="3 1"/><path d="M0 11h4v4H0z" fill="#23659c"/><circle cx="13" cy="3" r="2" fill="#fff" stroke="#2f7dbd" stroke-width="1.300"/></svg></button>
      <span class="vsep"></span>
      <button aria-label="Endpoint"><svg viewBox="0 0 16 16"><path d="M3 13L13 3" stroke="#222" stroke-width="1.500"/><circle cx="2.500" cy="13" r="2" fill="#fff" stroke="#2f7dbd" stroke-width="1.300"/><circle cx="13" cy="3" r="2" fill="#fff" stroke="#2f7dbd" stroke-width="1.300"/></svg></button>
      <button aria-label="Midpoint"><svg viewBox="0 0 16 16"><path d="M1 14L15 2" stroke="#222" stroke-width="1.500"/><circle cx="8" cy="8" r="2" fill="#fff" stroke="#2f7dbd" stroke-width="1.300"/></svg></button>
      <button aria-label="Intersection"><svg viewBox="0 0 16 16"><path d="M1 1l14 14M15 1L1 15" stroke="#222" stroke-width="1.500"/><circle cx="8" cy="8" r="2" fill="#fff" stroke="#2f7dbd" stroke-width="1.300"/></svg></button>
      <button aria-label="Apparent intersection"><svg viewBox="0 0 16 16"><path d="M1 1l14 14" stroke="#222" stroke-width="1.500"/><path d="M15 1L1 15" stroke="#222" stroke-width="1.500" stroke-dasharray="3 2"/><circle cx="8" cy="8" r="2" fill="#fff" stroke="#2f7dbd" stroke-width="1.300"/></svg></button>
      <button aria-label="Extension"><svg viewBox="0 0 16 16"><path d="M0 8h6" stroke="#222" stroke-width="1.500"/><path d="M7 8h9" stroke="#222" stroke-width="1.500" stroke-dasharray="1 1"/></svg></button>
      <span class="vsep"></span>
      <button aria-label="Center"><svg viewBox="0 0 16 16"><circle cx="8" cy="8" r="6.500" fill="#e1ecf6" stroke="#223548" stroke-width="1.300"/><circle cx="8" cy="8" r="2" fill="#fff" stroke="#2f7dbd" stroke-width="1.300"/></svg></button>
      <button aria-label="Quadrant"><svg viewBox="0 0 16 16"><circle cx="8" cy="8" r="5" fill="#cfdfee" stroke="#223548"/><g fill="#fff" stroke="#2f7dbd" stroke-width="1.300"><circle cx="8" cy="2.500" r="2"/><circle cx="8" cy="13.500" r="2"/><circle cx="2.500" cy="8" r="2"/><circle cx="13.500" cy="8" r="2"/></g></svg></button>
      <button aria-label="Tangent"><svg viewBox="0 0 16 16"><circle cx="9" cy="9" r="5.500" fill="#e1ecf6" stroke="#223548" stroke-width="1.300"/><path d="M1 9L9 1" stroke="#222"/><circle cx="5" cy="5" r="2" fill="#fff" stroke="#2f7dbd" stroke-width="1.300"/></svg></button>
      <span class="vsep"></span>
      <button aria-label="Perpendicular"><svg viewBox="0 0 16 16"><path d="M8 1v12M1 13h14" stroke="#222" stroke-width="1.300"/><circle cx="8" cy="13" r="2" fill="#fff" stroke="#2f7dbd" stroke-width="1.300"/></svg></button>
      <button aria-label="Parallel"><svg viewBox="0 0 16 16"><path d="M1 13L10 3M6 14L15 4" stroke="#222" stroke-width="1.800"/></svg></button>
      <button aria-label="Insert snap"><svg viewBox="0 0 16 16"><path d="M2.500 3.500h8v6h-8z" fill="#f0dc4c" stroke="#2c5f95"/><path d="M8 5h6v5H8z" fill="#e6f0f9" stroke="#2c5f95"/><circle cx="10" cy="11" r="3" fill="#f4e04a" stroke="#2c5f95"/></svg></button>
      <button aria-label="Node"><svg viewBox="0 0 16 16"><circle cx="9" cy="8" r="2" fill="#fff" stroke="#2f7dbd" stroke-width="1.500"/></svg></button>
      <span class="vsep"></span>
      <button aria-label="Nearest"><svg viewBox="0 0 16 16"><path d="M1 14L12 1M7 7l2 5" stroke="#222" stroke-width="1.500"/><path d="M7 5h6v3" stroke="#2f7dbd"/><circle cx="13" cy="11" r="2" fill="#fff" stroke="#2f7dbd"/></svg></button>
      <button aria-label="No snap"><svg viewBox="0 0 16 16"><path d="M3 13V6q0-4 4-4t4 4v5" stroke="#8d979e" stroke-width="3"/><path d="M1 14L14 2" stroke="#d0242b" stroke-width="2"/><path d="M12.500 11.500h3v3h-3z" fill="#fff" stroke="#555"/></svg></button>
      <span class="vsep"></span>
      <button aria-label="Snap settings"><svg viewBox="0 0 16 16"><path d="M3 12V6q0-4 3.500-4T10 6v6" stroke="#b5243a" stroke-width="3"/><path d="M1 13.500h4M8 13.500h4" stroke="#888" stroke-width="2"/><path d="M12.500 10.500h3v3h-3z" fill="#fff" stroke="#2f7dbd"/></svg></button>
    </div>
  </div>
  <div class="dock">
    <div class="vbar h-dim">
      <span class="vgrip"></span>
      <button aria-label="Linear dimension"><svg viewBox="0 0 16 16"><path d="M1 2v13M15 2v13M1 7h14" stroke="#111" stroke-width="1.500"/><path d="M1 7l4-3v6zM15 7l-4-3v6z" fill="#111"/></svg></button>
      <button aria-label="Aligned dimension"><svg viewBox="0 0 16 16"><path d="M1 6l4-4M11 15l4-4M3 4l10 9" stroke="#111" stroke-width="1.500"/><path d="M3 4l5 1-3 4zM13 13l-5-1 3-4z" fill="#111"/></svg></button>
      <button aria-label="Arc length"><svg viewBox="0 0 16 16"><path d="M2 12q2-8 11-9M6 15q1-7 9-8" stroke="#111" stroke-width="1.500"/><path d="M1 10h4v4H1zM12 1h4v3h-4z" fill="#2f7dbd"/><path d="M6 11l1-4 3 2z" fill="#111"/></svg></button>
      <button aria-label="Ordinate"><svg viewBox="0 0 16 16"><path d="M5 14V6h3V3M5 10h10M9 10V7h5v7" stroke="#111" stroke-width="1.500"/><path d="M1 2l1 2 2-2M2 4v2M12 1l3 3m0-3l-3 3M1 12h3v3H1z" stroke="#2f7dbd"/></svg></button>
      <span class="vsep"></span>
      <button aria-label="Radius"><svg viewBox="0 0 16 16"><circle cx="8" cy="8" r="6.500" stroke="#555" stroke-width="1.500"/><path d="M9 9L4 5" stroke="#111" stroke-width="1.500"/><path d="M3 3l5 2-3 3z" fill="#111"/></svg></button>
      <button aria-label="Jogged"><svg viewBox="0 0 16 16"><path d="M2 4q10-5 11 4 0 4-4 7" stroke="#555" stroke-width="1.500"/><path d="M3 13l4-4 1 2 4-5" stroke="#111" stroke-width="1.600"/><path d="M13 3v5l-4-2z" fill="#111"/></svg></button>
      <button aria-label="Diameter"><svg viewBox="0 0 16 16"><circle cx="8" cy="8" r="6.500" stroke="#555" stroke-width="1.500"/><path d="M4 4l8 8" stroke="#111" stroke-width="1.500"/><path d="M3 3l5 1-3 4zM13 13l-5-1 3-4z" fill="#111"/></svg></button>
      <button aria-label="Angular"><svg viewBox="0 0 16 16"><path d="M10 1L1 14h14M6 6q6 1 7 6" stroke="#111" stroke-width="1.300"/><path d="M5 5l4 1-3 3zM13 13l-2-4h4z" fill="#111"/></svg></button>
      <span class="vsep"></span>
      <button aria-label="Quick dimension"><svg viewBox="0 0 16 16"><path d="M5 8l8-5-1 5 2 1-6 6 1-5z" fill="#f2d81e" stroke="#8c7a10"/><path d="M1 1v14M15 1v14M1 5h14" stroke="#111" stroke-width="1.500"/><path d="M1 5l4-3v6zM15 5l-4-3v6z" fill="#111"/></svg></button>
      <button aria-label="Baseline"><svg viewBox="0 0 16 16"><path d="M1 1v14M15 1v5M10 8v5M1 4h14M1 10h9" stroke="#111" stroke-width="1.500"/><path d="M15 4l-4-2v4zM10 10L7 8v4zM1 4l3-2v4zM1 10l3-2v4z" fill="#111"/></svg></button>
      <button aria-label="Continue"><svg viewBox="0 0 16 16"><path d="M1 1v14M8 1v14M15 1v14M1 8h14" stroke="#111" stroke-width="1.300"/><path d="M1 8l3-2v4zM8 8L5 6v4zM8 8l3-2v4zM15 8l-3-2v4z" fill="#111"/></svg></button>
      <span class="vsep"></span>
      <button aria-label="Quick leader"><svg viewBox="0 0 16 16"><path d="M4 5l5-2 5 7-5 5-2-5z" fill="#f2d81e" stroke="#6c5f10"/><path d="M1 5h7M1 5l4-3M5 7L1 5" stroke="#111" stroke-width="1.500"/><path d="M10 7l2-6 3 6m-4-2h3" stroke="#23659c" stroke-width="1.400"/></svg></button>
      <button aria-label="Tolerance"><svg viewBox="0 0 16 16"><path d="M.5 3.500h15v9H.5zM9.500 3v10" fill="#e1ecf6" stroke="#23659c" stroke-width="1.500"/><circle cx="5" cy="8" r="2" stroke="#23659c"/><path d="M5 5v6M2 8h6M12 6v5" stroke="#23659c"/></svg></button>
      <button aria-label="Center mark"><svg viewBox="0 0 16 16"><circle cx="8" cy="8" r="6.500" stroke="#444" stroke-width="1.300"/><path d="M8 5v6M5 8h6" stroke="#111" stroke-width="1.800"/></svg></button>
      <span class="vsep"></span>
      <button aria-label="Dimension edit"><svg viewBox="0 0 16 16"><path d="M4 9l4-8 4 8M5 6h6" stroke="#23659c" stroke-width="1.800"/><path d="M1 9v6M15 9v6M1 12h14" stroke="#111" stroke-width="1.300"/><path d="M1 12l4-2v4zM15 12l-4-2v4z" fill="#111"/></svg></button>
      <button aria-label="Dimension text edit"><svg viewBox="0 0 16 16"><path d="M5 11l7-9 2 2-7 8z" fill="#e8bd2e" stroke="#805d0e"/><path d="M1 10v6M15 10v6M1 13h14" stroke="#111" stroke-width="1.300"/><path d="M1 13l4-2v4zM15 13l-4-2v4z" fill="#111"/></svg></button>
      <button aria-label="Dimension update"><svg viewBox="0 0 16 16"><path d="M1 1v5M13 1v5M1 3h12" stroke="#2f7dbd" stroke-width="1.500"/><path d="M3 5v9M15 5v9M3 9h12" stroke="#111" stroke-width="1.500"/><path d="M3 9l3-2v4zM15 9l-3-2v4z" fill="#111"/></svg></button>
      <span class="vsep"></span>
      <button aria-label="Dimension style"><svg viewBox="0 0 16 16"><path d="M1 9v6M15 9v6M1 13h14" stroke="#111" stroke-width="1.300"/><path d="M1 13l4-3v5zM15 13l-4-3v5z" fill="#111"/><path d="M15 2L9 8" stroke="#555" stroke-width="2"/><path d="M10 7l-5 5 6-3z" fill="#111"/></svg></button>
    </div>
    <div class="vbar h-inq">
      <span class="vgrip"></span>
      <button aria-label="Distance"><svg viewBox="0 0 16 16"><use href="#ruler"/><path d="M2 5h12" stroke="#23659c" stroke-dasharray="2 1"/><path d="M0 3h3v4H0zM13 3h3v4h-3z" fill="#2f7dbd"/></svg></button>
      <button aria-label="Area"><svg viewBox="0 0 16 16"><use href="#ruler"/><path d="M1 1l13 4v6H1z" fill="#2c6a9e" stroke="#1b4a73"/></svg></button>
      <button aria-label="Mass properties"><svg viewBox="0 0 16 16"><use href="#ruler"/><path d="M1 6l7-4 7 3v5l-6 1H1z" fill="#7fb0d8" stroke="#1b4a73"/><path d="M1 6l8 2v3H1z" fill="#2c6a9e"/></svg></button>
      <span class="vsep"></span>
      <button aria-label="List"><svg viewBox="0 0 16 16"><path d="M3 3q3 1 11-1l-2 4 1 7q-4-1-9 1l1-5z" fill="#dbe9f5" stroke="#3c6f9f"/><path d="M5 5l6-1M6 8l5-1M6 11l5-1" stroke="#23659c" stroke-width="1.500"/></svg></button>
      <button aria-label="Locate point"><svg viewBox="0 0 16 16"><path d="M2 1v13h13M0 4l2-3 2 3M12 12l3 2-3 2M0 12l4 4" stroke="#23659c" stroke-width="1.300"/><circle cx="9" cy="5" r="3.500" fill="#9dc4e4" stroke="#23659c" stroke-width="1.300"/><path d="M11 8l3 3" stroke="#23659c" stroke-width="2"/></svg></button>
    </div>
  </div>
</main>

<section class="command">
  <span class="cmdgrip"></span>
  <div class="cmdbox">
    <div class="history"><span>Command: '_.zoom _e</span>
      <div class="vscroll"><button aria-label="Scroll up"><svg viewBox="0 0 12 8"><path d="M4 5l2-2 2 2" stroke="#33476b" stroke-width="1.500"/></svg></button><button aria-label="Scroll down"><svg viewBox="0 0 12 8"><path d="M4 3l2 2 2-2" stroke="#33476b" stroke-width="1.500"/></svg></button></div>
    </div>
    <div class="prompt"><label for="cmd">Command:</label><input id="cmd" type="text">
      <div class="hscroll"><button aria-label="Scroll left"><svg viewBox="0 0 14 14"><path d="M8.500 3.500L5 7l3.500 3.500" stroke="#33476b" stroke-width="2"/></svg></button><button aria-label="Scroll thumb"><svg viewBox="0 0 14 14"><path d="M3.500 4v6M6 4v6M8.500 4v6M11 4v6" stroke="#8aa6e8"/></svg></button><i></i><button aria-label="Scroll right"><svg viewBox="0 0 14 14"><path d="M5.500 3.500L9 7l-3.500 3.500" stroke="#33476b" stroke-width="2"/></svg></button></div>
    </div>
  </div>
</section>

<footer class="status">
  <output class="coords">1501.82, 1007.39, 0.00</output>
  <div class="modes"><button>SNAP</button><button>GRID</button><button>ORTHO</button><button>POLAR</button><button class="on">OSNAP</button><button class="on">OTRACK</button><button class="on">DUCS</button><button class="on">DYN</button><button>LWT</button><button class="on">MODEL</button></div>
  <div class="tray">
    <button aria-label="Communication center"><svg viewBox="0 0 16 16"><path d="M2 2q6 0 7 8M10 1L5 7" stroke="#5375a3" stroke-width="2"/><path d="M2 4q0 8 7 8z" fill="#a9bfdb" stroke="#4b678f"/><path d="M10 5l6 10H5z" fill="#f7dc1e" stroke="#9c8408"/><path d="M10.500 8v4m0 1v1" stroke="#111" stroke-width="1.400"/></svg></button>
    <button aria-label="Lock toolbars"><svg viewBox="0 0 16 16"><path d="M1 7h9v8H1z" fill="#d6b22a" stroke="#4d3e08"/><path d="M8 7V4q3-5 6 0v4" stroke="#4d3e08" stroke-width="2"/><path d="M5 10h2v3H5z" fill="#222"/></svg></button>
    <button aria-label="Associated standards"><svg viewBox="0 0 16 16"><path d="M1 3h12v11H1z" fill="#3b6791"/><path d="M4 1v10M9 1v10M2 5h10" stroke="#dce8f2" stroke-width="1.500"/><circle cx="11.500" cy="11" r="4" fill="#2da146"/><path d="M9.500 11l1.500 2 3-4" stroke="#fff" stroke-width="1.500"/></svg></button>
  </div>
  <button class="traymenu" aria-label="Tray menu"><svg viewBox="0 0 16 16"><path d="M5 9h7l-3.500 4z" fill="#000"/></svg></button>
  <button class="clean" aria-label="Clean screen"><svg viewBox="0 0 16 16"><path d="M1 1h14v14H1z" fill="#9cc3e4" stroke="#2c5277" stroke-width="1.500"/><path d="M3.500 3.500h9v9h-9z" fill="#c9e0f2" stroke="#5d8ab3"/></svg></button>
</footer>
</body>
</html>
```
FILE: styles.css
```css
* { box-sizing: border-box; }
body {
  margin: 0; height: 100vh; display: flex; flex-direction: column; overflow: hidden;
  background: #ece9d8; color: #000; border-bottom: 3px solid #2c78e4;
  font-family: "DejaVu Sans Condensed", "DejaVu Sans", sans-serif; font-size: 10px;
}
.defs { display: none; }
svg { fill: none; display: block; }
button { border: 0; padding: 0; margin: 0; background: none; font: inherit; color: inherit; display: flex; align-items: center; justify-content: center; flex: none; }
button svg { width: 16px; height: 16px; }
a { color: inherit; text-decoration: none; }

.titlebar { flex: none; height: 24px; display: flex; align-items: center; padding: 0 1px 0 2px; background: linear-gradient(#3c8cf8 0, #0a5ce8 3px, #0054e3 8px, #0062f5 18px, #0060f0 21px, #0040b8 24px); }
.app-icon { width: 15px; height: 15px; flex: none; }
.titlebar h1 { flex: 1; margin: 0 0 0 3px; font: bold 12px "Noto Sans", sans-serif; color: #fff; white-space: nowrap; text-shadow: 1px 1px #0a2f8c; }
.win-buttons { display: flex; gap: 2px; }
.win-buttons button { width: 20px; height: 20px; border: 1px solid #fff; border-radius: 3px; background: linear-gradient(135deg, #5c8df5, #2457d8 60%, #1c49c4); }
.win-buttons .close { background: linear-gradient(135deg, #f09a80, #e0502a 50%, #c03c18); }

.menubar { flex: none; height: 19px; display: flex; align-items: center; padding-left: 4px; gap: 11px; }
.menubar a { line-height: 14px; }
.doc-icon { width: 15px; height: 16px; margin-right: -6px; }
.mdi { margin-left: auto; display: flex; gap: 2px; padding-right: 2px; }
.mdi button { width: 15px; height: 15px; background: #f4f2e8; }
.mdi svg { width: 12px; height: 12px; }

.toolrow { flex: none; height: 26px; display: flex; border-top: 1px solid #fff; }
.menubar + .toolrow { height: 27px; }
.bar { display: flex; align-items: center; padding-right: 2px; margin-right: 1px; border-right: 1px solid #aca899; border-bottom: 1px solid #c5c2b2; }
.bar button { width: 22px; height: 22px; }
.bar .caret { width: 12px; }
.caret svg { width: 6px; height: 16px; }
.grip { width: 7px; height: 22px; margin: 0 2px; border: 1px solid #fff; border-width: 0 2px; box-shadow: 1px 0 #aca899, inset 1px 0 #aca899; flex: none; }
.sep { width: 1px; height: 20px; margin: 0 2px 0 1px; background: #c2bfae; flex: none; box-shadow: 1px 0 #fff; }

.combo { position: relative; display: flex; align-items: center; height: 20px; background: #fff; border: 1px solid #7f9db9; padding-left: 4px; gap: 4px; flex: none; }
.combo select { appearance: none; flex: 1; min-width: 0; border: 0; padding: 0; margin: 0; background: none; font: inherit; color: #000; opacity: 1; }
.combo .chev { width: 14px; height: 18px; flex: none; }
.w-std { width: 95px; }
.w-layer { width: 281px; margin-left: 1px; gap: 2px; }
.w-layer select { font: 10px "Liberation Sans", Arial, sans-serif; padding-left: 2px; }
.w-color { width: 141px; }
.w-type { width: 150px; }
.w-weight { width: 117px; }
.w-plot { width: 112px; padding-left: 9px; }
.combo.off { background: #ece9d8; border-color: #c9c7ba; }
.combo.off select { color: #aca899; }
.off .chev { filter: grayscale(1); opacity: .3; }
.layer-state { width: 62px; height: 16px; margin-right: -2px; flex: none; }
.swatch { width: 10px; height: 10px; background: #f0f; border: 1px solid #000; flex: none; }
.rule { height: 1px; background: #222; flex: none; width: 57px; }
.w-weight .rule { width: 35px; }

.workspace { flex: 1; min-height: 0; display: flex; }
.dock { width: 24px; flex: none; display: flex; flex-direction: column; }
.dock.wide { width: 25px; margin-right: 1px; }
.vbar { display: flex; flex-direction: column; align-items: center; padding: 1px 1px 5px 0; border: 1px solid #fff; border-color: #fff #aca899 #aca899 #fff; flex: none; }
.vbar button { flex: 1; width: 22px; min-height: 0; }
.vgrip { width: 19px; height: 7px; margin: 1px 0; border: 1px solid #fff; border-width: 2px 0; box-shadow: 0 1px #aca899, inset 0 1px #aca899; flex: none; }
.vsep { width: 18px; height: 2px; margin: 2px 0; background: #fff; border-top: 1px solid #aca899; flex: none; }
.h-draw { height: 407px; }
.h-modify { height: 366px; }
.h-order { height: 99px; }
.h-snap { height: 393px; }
.h-dim { height: 415px; }
.h-inq { height: 126px; }

.document { flex: 1; min-width: 0; display: flex; flex-direction: column; border-top: 1px solid #8d8b7d; margin-right: 1px; border-right: 1px solid #fff; }
.view { flex: 1; min-height: 0; display: flex; padding-right: 1px; }
.palettes { width: 26px; flex: none; display: flex; flex-direction: column; background: #6f6f6f; padding: 0 2px 1px 1px; gap: 2px; border-left: 1px solid #b4b1a3; }
.palette { display: flex; flex-direction: column; align-items: center; background: #7a96df; border-left: 1px solid #a9baea; padding: 2px 2px 6px 0; gap: 4px; color: #eef2fc; }
.xref { flex: 379 1 0; }
.props { flex: 353 1 0; }
.palette button, .pal-icon { width: 16px; height: 16px; }
.palette h2 { flex: 1; margin: 0; font: 12px "DejaVu Sans Condensed", "DejaVu Sans", sans-serif; writing-mode: vertical-rl; transform: rotate(180deg); white-space: nowrap; padding-top: 8px; line-height: 16px; }
.palette h2 + button { margin-bottom: 2px; }
.canvas { flex: 1; min-width: 0; background: #000; }
.drawing { width: 100%; height: 100%; shape-rendering: crispEdges; }
.drawing .soft { shape-rendering: auto; }
.ext { stroke: #808080; }
.dash, .fold path { stroke-dasharray: 15 6; }
.fold { stroke: #0c0; }
.cut { stroke: #e000e0; }
.dim { stroke: #e6e62e; }
.num { fill: #f4f430; font: 12px "Liberation Sans", Arial, sans-serif; text-anchor: middle; }
.note { fill: #d800d8; font: 15px "Liberation Sans", Arial, sans-serif; text-anchor: middle; }
.note .big { font-size: 39px; fill: #f0f; }
.ucs { stroke: #e8e8e8; }

.tabs { height: 16px; flex: none; display: flex; align-items: stretch; border-top: 1px solid #716f64; }
.tabs button { width: 17px; border-right: 1px solid #aca899; box-shadow: inset 1px 0 #fff; }
.tabs button svg { width: 12px; height: 12px; }
.tab { display: flex; align-items: center; padding: 0 7px; margin-right: -3px; background: #000; clip-path: polygon(0 0, 100% 0, calc(100% - 5px) 100%, 5px 100%); position: relative; z-index: 0; line-height: 14px; }
.tab::before { content: ""; position: absolute; inset: 0 1px 1px; background: #ece9d8; clip-path: polygon(0 0, 100% 0, calc(100% - 5px) 100%, 5px 100%); z-index: -1; }
.tabs .on { color: #fff; margin-left: 3px; z-index: 1; }
.tabs .on::before { background: #000; }

.command { flex: none; height: 60px; display: flex; border-top: 1px solid #fff; box-shadow: inset 0 5px #ece9d8, inset 0 6px #000; padding: 15px 7px 3px 5px; }
.cmdgrip { width: 7px; margin-right: 4px; border: 1px solid #fff; border-width: 0 2px; box-shadow: 1px 0 #aca899, inset 1px 0 #aca899; }
.cmdbox { flex: 1; display: flex; flex-direction: column; border-left: 1px solid #404040; border-top: 2px solid #404040; font: 12px "Liberation Mono", "Courier New", monospace; }
.history { flex: 1; display: flex; align-items: center; background: #fff; border-bottom: 1px solid #aca899; }
.history span { flex: 1; padding-bottom: 4px; }
.vscroll { display: flex; flex-direction: column; gap: 1px; }
.vscroll button, .hscroll button { background: #c3d3fb; border: 1px solid #a9bdf0; border-radius: 2px; }
.vscroll button { width: 14px; height: 9px; }
.vscroll svg { width: 12px; height: 8px; }
.prompt { height: 19px; flex: none; display: flex; align-items: center; background: #fff; margin-right: 16px; }
.prompt input { flex: 1; min-width: 0; border: 0; padding: 0 0 0 7px; font: inherit; outline: 0; background: none; }
.hscroll { display: flex; align-items: center; gap: 1px; padding: 0 1px 0 3px; height: 17px; background: #f4f3ee; }
.hscroll button { width: 14px; height: 15px; }
.hscroll i { width: 14px; }
.hscroll svg { width: 12px; height: 12px; }

.status { flex: none; height: 21px; display: flex; align-items: center; border-top: 1px solid #aca899; padding: 0 3px 0 5px; }
.coords { width: 154px; height: 17px; line-height: 15px; padding-left: 1px; border: 1px solid #aca899; border-color: #aca899 #fff #fff #aca899; margin-right: 4px; flex: none; }
.modes { display: flex; gap: 3px; font: 10px "Liberation Sans", Arial, sans-serif; }
.modes button { height: 17px; padding: 0 1px; border: 1px solid #fff; border-color: #fff #8d8b7d #8d8b7d #fff; }
.modes .on { border-color: #8d8b7d #fff #fff #8d8b7d; }
.tray { margin-left: auto; display: flex; gap: 4px; border: 1px solid #aca899; border-right-color: #fff; border-bottom: 0; padding: 0 2px; }
.traymenu { margin-right: 3px; width: 17px; height: 17px; }
```
